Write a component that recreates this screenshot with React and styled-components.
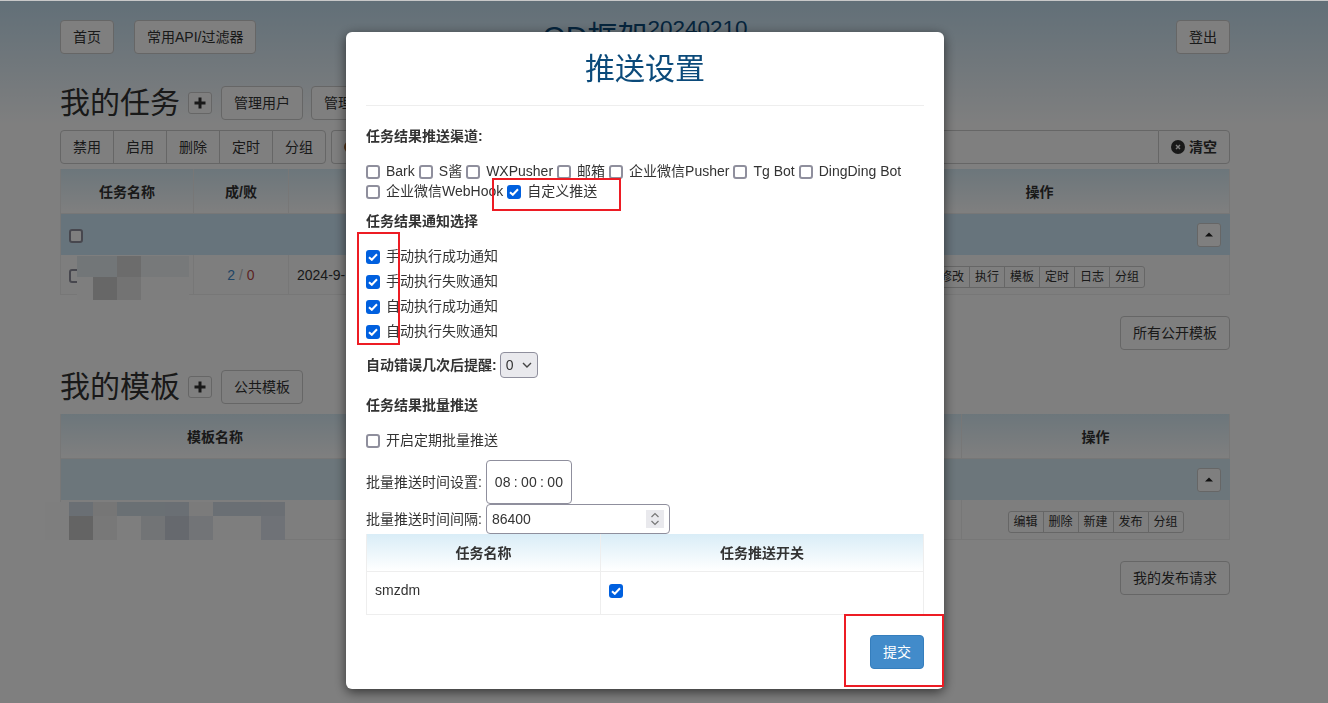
import React from 'react'
import styled, { createGlobalStyle } from 'styled-components'

const GlobalStyle = createGlobalStyle`
  html, body {
    margin: 0;
    height: 100%;
    overflow: hidden;
    background: #fff;
  }
  body {
    font-family: "Liberation Sans", "Noto Sans CJK SC", sans-serif;
    font-size: 14px;
    line-height: 20px;
    color: #333;
  }
  * { box-sizing: border-box; }
`

const Page = styled.div`
  height: 703px;
  border-top: 1px solid #c8c8c8;
  background: linear-gradient(to bottom, #c4dff0 0, #fff 125px);
`
const Container = styled.div`
  width: 1170px;
  margin-left: 60px;
  padding-top: 19px;
`
const TopBar = styled.div`
  display: flex;
  align-items: flex-start;
  gap: 20px;
  height: 34px;
`
const Brand = styled.div`
  margin-left: 266px;
  font-size: 30px;
  line-height: 34px;
  color: #0b4a7a;
  white-space: nowrap;
  sup {
    font-size: 22.5px;
    line-height: 0;
    vertical-align: 11px;
  }
`
const Btn = styled.button`
  font: inherit;
  color: #333;
  height: 34px;
  padding: 6px 12px;
  background: #fff;
  border: 1px solid #ccc;
  border-radius: 4px;
  white-space: nowrap;
  margin-left: ${p => (p.$push ? 'auto' : '0')};
`
const Heading = styled.div`
  display: flex;
  align-items: center;
  gap: 8px;
  height: 34px;
  margin-top: ${p => p.$top}px;
`
const HeadingText = styled.h2`
  margin: 0;
  font-size: 30px;
  font-weight: 400;
  line-height: 34px;
  color: #333;
  white-space: nowrap;
`
const MiniBtn = styled.button`
  width: 24px;
  height: ${p => p.$h || 22}px;
  padding: 0;
  display: flex;
  align-items: center;
  justify-content: center;
  background: #fff;
  border: 1px solid #ccc;
  border-radius: 3px;
  color: #333;
`
const AddBtn = styled(MiniBtn)`
  margin-right: 1px;
`
const Toolbar = styled.div`
  display: flex;
  gap: 5px;
  margin-top: 10px;
`
const BtnGroup = styled.div`
  display: flex;
  button {
    border-radius: 0;
    margin-left: -1px;
  }
  button:first-child {
    margin-left: 0;
    border-radius: 4px 0 0 4px;
  }
  button:last-child {
    border-radius: 0 4px 4px 0;
  }
`
const SearchBox = styled.div`
  flex: 1;
  height: 34px;
  display: flex;
  align-items: center;
  padding-left: 11px;
  border: 1px solid #ccc;
  border-right: 0;
  border-radius: 4px 0 0 4px;
`
const ClearBtn = styled(Btn)`
  display: flex;
  align-items: center;
  gap: 4px;
  border-radius: 0 4px 4px 0;
  font-weight: 700;
  width: 72px;
  margin-left: -5px;
`
const GridTable = styled.table`
  width: 1170px;
  table-layout: fixed;
  border-collapse: separate;
  border-spacing: 0;
  border-left: 1px solid #eee;
  margin-top: ${p => p.$top}px;
`
const HeadCell = styled.th`
  height: 45px;
  padding: 1px 0 0;
  text-align: center;
  color: #333;
  border-right: 1px solid #eee;
  border-bottom: 1px solid #eee;
  background: linear-gradient(to bottom, #d9edf7, #fff);
`
const GroupRow = styled.tr`
  background: ${p => p.$bg};
`
const GroupCell = styled.td`
  height: 41px;
  padding: 0 9px 0 8px;
`
const GroupInner = styled.div`
  display: flex;
  align-items: center;
  justify-content: space-between;
`
const Cell = styled.td`
  height: 40px;
  padding: 0 8px;
  border-right: 1px solid #eee;
  border-bottom: 1px solid #eee;
  background: #fdfdfd;
  text-align: ${p => p.$align || 'left'};
  white-space: nowrap;
  position: relative;
`
const Ratio = styled.span`
  display: block;
  text-align: center;
  b { font-weight: 400; color: #428bca; }
  i { font-style: normal; color: #bbb; }
  em { font-style: normal; color: #b94a48; }
`
const XsGroup = styled.div`
  display: inline-flex;
  vertical-align: middle;
  margin-top: 4px;
  button {
    width: 36px;
    height: 22px;
    margin-left: -1px;
    padding: 0;
    font: inherit;
    font-size: 12px;
    line-height: 18px;
    color: #333;
    background: #fff;
    border: 1px solid #ccc;
  }
  button:first-child {
    margin-left: 0;
    border-radius: 3px 0 0 3px;
  }
  button:last-child {
    border-radius: 0 3px 3px 0;
  }
`
const Right = styled.div`
  display: flex;
  justify-content: flex-end;
  margin-top: ${p => p.$top}px;
`
const Mosaic = styled.div`
  position: absolute;
  left: ${p => p.$left}px;
  top: ${p => p.$top}px;
  display: grid;
  grid-template-columns: ${p => p.$cols};
  grid-template-rows: ${p => p.$rows};
`
const Tile = styled.div`
  background: ${p => p.$c};
`
const Backdrop = styled.div`
  position: fixed;
  inset: 1px 0 0 0;
  background: rgba(0, 0, 0, 0.5);
`
const Modal = styled.div`
  position: fixed;
  left: 346px;
  top: 32px;
  width: 598px;
  height: 657px;
  padding: 0 20px;
  background: #fff;
  border-radius: 6px;
  box-shadow: 0 3px 12px rgba(0, 0, 0, 0.6);
`
const ModalTitle = styled.h3`
  margin: 0;
  height: 74px;
  padding-top: 17px;
  font-size: 30px;
  font-weight: 400;
  line-height: 40px;
  text-align: center;
  color: #0b4a7a;
  border-bottom: 1px solid #eee;
`
const Label = styled.div`
  font-weight: 700;
  height: 20px;
  margin-top: ${p => p.$top}px;
  white-space: nowrap;
`
const Options = styled.div`
  display: flex;
  flex-wrap: wrap;
  column-gap: 4px;
  margin-top: 15px;
`
const NoticeList = styled.div`
  margin-top: 12px;
`
const Option = styled.label`
  display: flex;
  align-items: center;
  gap: 6px;
  height: ${p => p.$h || 20}px;
  margin-top: ${p => p.$top || 0}px;
  white-space: nowrap;
`
const Box = styled.span`
  width: 14px;
  height: 14px;
  flex: none;
  margin-top: 2px;
  display: flex;
  align-items: center;
  justify-content: center;
  border-radius: 3px;
  border: ${p => (p.$checked ? '0' : '2px solid #8f8f9d')};
  background: ${p => (p.$checked ? '#0060df' : '#fff')};
`
const FieldRow = styled.div`
  display: flex;
  align-items: center;
  margin-top: ${p => p.$top || 0}px;
  white-space: nowrap;
`
const SelectBox = styled.div`
  width: 38px;
  height: 26px;
  margin-left: 3px;
  padding: 0 5px;
  display: flex;
  align-items: center;
  justify-content: space-between;
  background: #e9e9ed;
  border: 1px solid #8f8f9d;
  border-radius: 4px;
`
const TimeBox = styled.div`
  width: 86px;
  height: 44px;
  margin-left: 4px;
  display: flex;
  align-items: center;
  justify-content: center;
  word-spacing: -0.5px;
  border: 1px solid #8f8f9d;
  border-radius: 4px;
`
const NumberBox = styled.div`
  width: 184px;
  height: 30px;
  margin-left: 4px;
  padding: 0 5px;
  display: flex;
  align-items: center;
  justify-content: space-between;
  border: 1px solid #8f8f9d;
  border-radius: 4px;
`
const Spinner = styled.span`
  width: 18px;
  height: 18px;
  display: flex;
  align-items: center;
  justify-content: center;
  background: #e9e9ed;
`
const PushTable = styled.table`
  width: 558px;
  table-layout: fixed;
  border-collapse: separate;
  border-spacing: 0;
  border-left: 1px solid #eee;
`
const PushHead = styled.th`
  height: 38px;
  padding: 0;
  color: #333;
  text-align: center;
  border-right: 1px solid #eee;
  border-bottom: 1px solid #eee;
  background: linear-gradient(to bottom, #d9edf7, #fff);
`
const PushCell = styled.td`
  height: 43px;
  padding: 8px 8px 0;
  vertical-align: top;
  border-right: 1px solid #eee;
  border-bottom: 1px solid #eee;
`
const Footer = styled.div`
  display: flex;
  justify-content: flex-end;
  margin-top: 20px;
`
const Submit = styled.button`
  font: inherit;
  height: 34px;
  padding: 6px 12px;
  color: #fff;
  background: #428bca;
  border: 1px solid #357ebd;
  border-radius: 4px;
`
const Mark = styled.div`
  position: fixed;
  left: ${p => p.$x}px;
  top: ${p => p.$y}px;
  width: ${p => p.$w}px;
  height: ${p => p.$h}px;
  border: 2px solid #ed1c24;
  pointer-events: none;
`

const Plus = () => (
  <svg width="12" height="12" viewBox="0 0 12 12"><path d="M4.500 0.500h3v4h4v3h-4v4h-3v-4h-4v-3h4z" fill="currentColor" /></svg>
)
const Caret = () => (
  <svg width="8" height="5" viewBox="0 0 8 5"><path d="M4 0.500L8 4.500H0z" fill="#222" /></svg>
)
const ClearIcon = () => (
  <svg width="14" height="14" viewBox="0 0 14 14">
    <circle cx="7" cy="7" r="7" fill="#333" />
    <path d="M5 5l4 4M9 5l-4 4" stroke="#fff" strokeWidth="1.400" />
  </svg>
)
const SearchIcon = () => (
  <svg width="14" height="14" viewBox="0 0 14 14"><circle cx="7" cy="7" r="6" fill="#a8672c" /></svg>
)
const Chevron = () => (
  <svg width="10" height="6" viewBox="0 0 10 6"><path d="M1 1l4 4 4-4" fill="none" stroke="#444" strokeWidth="1.400" /></svg>
)
const SpinArrows = () => (
  <svg width="10" height="14" viewBox="0 0 10 14">
    <path d="M1.500 5l3.500-3.500 3.500 3.500M1.500 9l3.500 3.500 3.500-3.500" fill="none" stroke="#777" strokeWidth="1.200" />
  </svg>
)
const Check = ({ on }) => (
  <Box $checked={on}>
    {on && (
      <svg width="10" height="8" viewBox="0 0 10 8"><path d="M1 4.200l2.800 2.600L9 1.200" fill="none" stroke="#fff" strokeWidth="2" /></svg>
    )}
  </Box>
)

const channels = [
  ['Bark', false], ['S酱', false], ['WXPusher', false], ['邮箱', false],
  ['企业微信Pusher', false], ['Tg Bot', false], ['DingDing Bot', false],
  ['企业微信WebHook', false], ['自定义推送', true],
]
const notices = ['手动执行成功通知', '手动执行失败通知', '自动执行成功通知', '自动执行失败通知']
const taskTiles = [
  '#e4ecf1', '#e4ecf1', '#d8d8d8', '#eef2f5', '#eef2f5',
  '#fdfdfd', '#cfcfcf', '#e6e6e6', '#fdfdfd', '#fdfdfd',
]
const tplTiles = [
  '#fdfdfd', '#d4dee8', '#ececec', '#d4e0e8', '#d4e0e8', '#d4dee8', '#f6f6f6', '#d4dee8', '#d4dee8', '#d6dee8',
  '#fdfdfd', '#c8c8c8', '#f0f0f0', '#fdfdfd', '#e4e8ec', '#cdd2dc', '#e4e8ef', '#fdfdfd', '#fdfdfd', '#dfe5ee',
]

const App = () => {
  return (
    <>
      <GlobalStyle />
      <Page>
        <Container>
          <TopBar>
            <Btn>首页</Btn>
            <Btn>常用API/过滤器</Btn>
            <Brand>QD框架<sup>20240210</sup></Brand>
            <Btn $push>登出</Btn>
          </TopBar>

          <Heading $top={32}>
            <HeadingText>我的任务</HeadingText>
            <AddBtn><Plus /></AddBtn>
            <Btn>管理用户</Btn>
            <Btn>管理</Btn>
          </Heading>
          <Toolbar>
            <BtnGroup>
              <Btn>禁用</Btn>
              <Btn>启用</Btn>
              <Btn>删除</Btn>
              <Btn>定时</Btn>
              <Btn>分组</Btn>
            </BtnGroup>
            <SearchBox><SearchIcon /></SearchBox>
            <ClearBtn><ClearIcon />清空</ClearBtn>
          </Toolbar>
          <GridTable $top={5}>
            <colgroup>
              <col width="133" />
              <col width="95" />
              <col width="561" />
              <col width="380" />
            </colgroup>
            <thead>
              <tr>
                <HeadCell>任务名称</HeadCell>
                <HeadCell>成/败</HeadCell>
                <HeadCell />
                <HeadCell>操作</HeadCell>
              </tr>
            </thead>
            <tbody>
              <GroupRow $bg="#cfe8f8">
                <GroupCell colSpan={4}>
                  <GroupInner>
                    <Check on={false} />
                    <MiniBtn $h={24}><Caret /></MiniBtn>
                  </GroupInner>
                </GroupCell>
              </GroupRow>
              <tr>
                <Cell>
                  <Check on={false} />
                  <Mosaic $left={16} $top={1} $cols="16px repeat(4, 24px)" $rows="21px 23px">
                    {taskTiles.map((c, i) => <Tile key={i} $c={c} />)}
                  </Mosaic>
                </Cell>
                <Cell><Ratio><b>2</b> <i>/</i> <em>0</em></Ratio></Cell>
                <Cell>2024-9-</Cell>
                <Cell $align="center">
                  <XsGroup>
                    <button>修改</button>
                    <button>执行</button>
                    <button>模板</button>
                    <button>定时</button>
                    <button>日志</button>
                    <button>分组</button>
                  </XsGroup>
                </Cell>
              </tr>
            </tbody>
          </GridTable>
          <Right $top={21}><Btn>所有公开模板</Btn></Right>

          <Heading $top={20}>
            <HeadingText>我的模板</HeadingText>
            <AddBtn><Plus /></AddBtn>
            <Btn>公共模板</Btn>
          </Heading>
          <GridTable $top={10}>
            <colgroup>
              <col width="309" />
              <col width="592" />
              <col width="268" />
            </colgroup>
            <thead>
              <tr>
                <HeadCell>模板名称</HeadCell>
                <HeadCell />
                <HeadCell>操作</HeadCell>
              </tr>
            </thead>
            <tbody>
              <GroupRow $bg="#d9edf7">
                <GroupCell colSpan={3}>
                  <GroupInner>
                    <span />
                    <MiniBtn $h={24}><Caret /></MiniBtn>
                  </GroupInner>
                </GroupCell>
              </GroupRow>
              <tr>
                <Cell>
                  <Mosaic $left={-16} $top={2} $cols="repeat(10, 24px)" $rows="14px 24px">
                    {tplTiles.map((c, i) => <Tile key={i} $c={c} />)}
                  </Mosaic>
                </Cell>
                <Cell />
                <Cell $align="center">
                  <XsGroup>
                    <button>编辑</button>
                    <button>删除</button>
                    <button>新建</button>
                    <button>发布</button>
                    <button>分组</button>
                  </XsGroup>
                </Cell>
              </tr>
            </tbody>
          </GridTable>
          <Right $top={21}><Btn>我的发布请求</Btn></Right>
        </Container>
      </Page>

      <Backdrop />
      <Modal>
        <ModalTitle>推送设置</ModalTitle>
        <Label $top={20}>任务结果推送渠道:</Label>
        <Options>
          {channels.map(([name, on]) => (
            <Option key={name}><Check on={on} />{name}</Option>
          ))}
        </Options>
        <Label $top={10}>任务结果通知选择</Label>
        <NoticeList>
          {notices.map(n => (
            <Option key={n} $h={25}><Check on />{n}</Option>
          ))}
        </NoticeList>
        <FieldRow $top={9}>
          <b>自动错误几次后提醒:</b>
          <SelectBox>0<Chevron /></SelectBox>
        </FieldRow>
        <Label $top={17}>任务结果批量推送</Label>
        <Option $top={15}><Check on={false} />开启定期批量推送</Option>
        <FieldRow $top={10}>
          批量推送时间设置:
          <TimeBox>08 : 00 : 00</TimeBox>
        </FieldRow>
        <FieldRow>
          批量推送时间间隔:
          <NumberBox>86400<Spinner><SpinArrows /></Spinner></NumberBox>
        </FieldRow>
        <PushTable>
          <colgroup>
            <col width="234" />
            <col width="323" />
          </colgroup>
          <thead>
            <tr>
              <PushHead>任务名称</PushHead>
              <PushHead>任务推送开关</PushHead>
            </tr>
          </thead>
          <tbody>
            <tr>
              <PushCell>smzdm</PushCell>
              <PushCell><Option><Check on /></Option></PushCell>
            </tr>
          </tbody>
        </PushTable>
        <Footer><Submit>提交</Submit></Footer>
      </Modal>
      <Mark $x={492} $y={178} $w={129} $h={33} />
      <Mark $x={357} $y={232} $w={43} $h={113} />
      <Mark $x={844} $y={614} $w={100} $h={73} />
    </>
  )
}

export default App
